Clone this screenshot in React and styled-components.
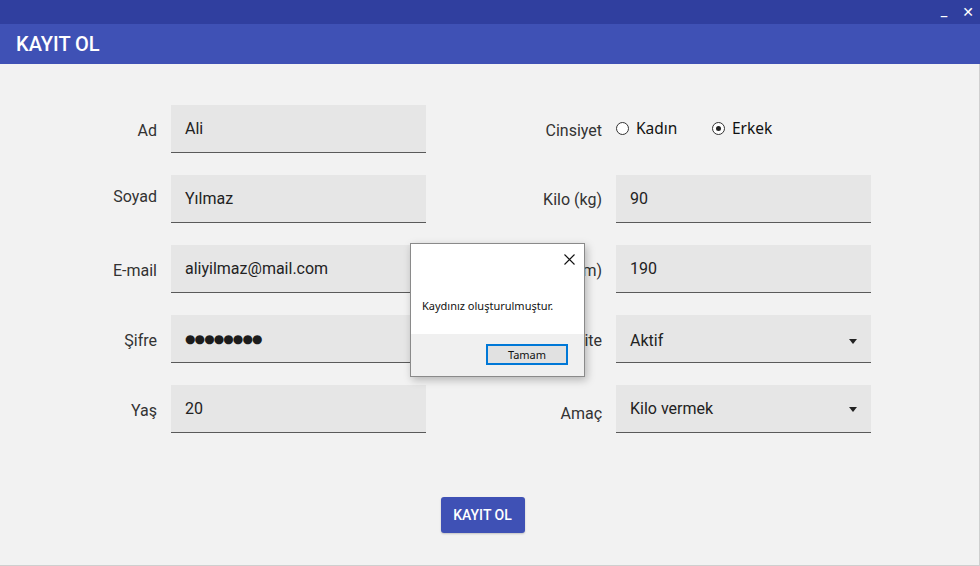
import React from "react";
import styled, { createGlobalStyle } from "styled-components";

const Global = createGlobalStyle`
  html, body { margin: 0; padding: 0; }
  body { width: 980px; height: 566px; overflow: hidden; background: #f2f2f2; font-family: Roboto, "Noto Sans", sans-serif; }
`;

const Win = styled.div`
  width: 980px;
  height: 566px;
  display: flex;
  flex-direction: column;
  position: relative;
  background: #f2f2f2;
`;

const TitleBar = styled.div`
  height: 24px;
  background: #303f9f;
  display: flex;
  justify-content: flex-end;
  align-items: center;
  gap: 12px;
  padding-right: 6px;
`;

const WinBtn = styled.span`
  color: #fff;
  font-family: "DejaVu Sans", sans-serif;
  font-weight: bold;
  font-size: ${p => p.$size || 12}px;
  line-height: 1;
  width: 12px;
  text-align: center;
  padding-bottom: ${p => p.$up || 0}px;
`;

const Header = styled.div`
  height: 40px;
  background: #3f51b5;
  display: flex;
  align-items: center;
  padding-left: 16px;
  color: #fff;
  font-family: Roboto, sans-serif;
  font-weight: 500;
  font-size: 20px;
`;

const Body = styled.div`
  flex: 1;
  border-right: 1px solid #cfcfcf;
  border-bottom: 1px solid #cfcfcf;
  padding-top: 41px;
  display: flex;
  flex-direction: column;
`;

const Form = styled.div`
  display: grid;
  grid-template-columns: 157px 255px 162px 255px;
  grid-auto-rows: 48px;
  column-gap: 14px;
  row-gap: 22px;
`;

const Label = styled.div`
  display: flex;
  align-items: center;
  justify-content: flex-end;
  font-size: 16px;
  color: #333;
  padding-top: ${p => p.$down ?? 2}px;
  padding-bottom: ${p => p.$up ?? 0}px;
`;

const Field = styled.div`
  background: #e6e6e6;
  border-bottom: 1px solid #5a5a5a;
  box-sizing: border-box;
  display: flex;
  align-items: center;
  justify-content: space-between;
  padding: 0 14px;
  padding-top: ${p => p.$down ?? 0}px;
  padding-bottom: ${p => p.$up ?? 0}px;
  font-size: 16px;
  color: #222;
`;

const Dots = styled.span`
  font-family: "DejaVu Sans", sans-serif;
  font-size: 12px;
  letter-spacing: -0.9px;
  color: #1c1c1c;
`;

const Arrow = styled.span`
  width: 0;
  height: 0;
  border-left: 4px solid transparent;
  border-right: 4px solid transparent;
  border-top: 5px solid #222;
  margin-top: 1px;
`;

const Radios = styled.div`
  display: flex;
  align-items: center;
  padding-bottom: 2px;
`;

const Radio = styled.label`
  display: flex;
  align-items: center;
  gap: 7px;
  width: ${p => p.$w || "auto"};
  font-family: "Noto Sans", "Open Sans", sans-serif;
  font-size: 15.5px;
  color: #111;
`;

const Circle = styled.span`
  width: 11px;
  height: 11px;
  border: 1px solid #333;
  border-radius: 50%;
  background: #fff;
  display: flex;
  align-items: center;
  justify-content: center;
  &::after {
    content: "";
    width: 5px;
    height: 5px;
    border-radius: 50%;
    background: ${p => (p.$on ? "#222" : "transparent")};
  }
`;

const Footer = styled.div`
  display: flex;
  justify-content: center;
  padding-right: 14px;
  margin-top: 64px;
`;

const Submit = styled.button`
  width: 84px;
  height: 36px;
  border: none;
  border-radius: 3px;
  background: #3f51b5;
  color: #fff;
  font-family: Roboto, sans-serif;
  font-weight: 500;
  font-size: 14px;
  box-shadow: 0 1px 2px rgba(0,0,0,0.2);
`;

const Dialog = styled.div`
  position: absolute;
  left: 410px;
  top: 243px;
  width: 175px;
  height: 134px;
  box-sizing: border-box;
  border: 1px solid #8a8a8a;
  background: #fff;
  box-shadow: 2px 3px 8px rgba(0,0,0,0.25);
  display: flex;
  flex-direction: column;
  font-family: "Noto Sans", "Liberation Sans", sans-serif;
`;

const DlgTop = styled.div`
  flex: 1;
  position: relative;
  padding: 54px 0 0 11px;
  font-size: 11px;
  color: #111;
`;

const Close = styled.svg`
  position: absolute;
  right: 9px;
  top: 10px;
`;

const DlgBottom = styled.div`
  height: 42px;
  background: #f0f0f0;
  display: flex;
  justify-content: flex-end;
  align-items: flex-start;
  padding: 10px 16px 0 0;
  box-sizing: border-box;
`;

const OkBtn = styled.button`
  width: 82px;
  height: 21px;
  box-sizing: border-box;
  border: 2px solid #0078d7;
  background: #e1e1e1;
  font-family: "Noto Sans", "Liberation Sans", sans-serif;
  font-size: 11px;
  color: #111;
  padding: 0;
`;

export default function App() {
  return (
    <Win>
      <Global />
      <TitleBar>
        <WinBtn $size={13} $up={6}>_</WinBtn>
        <WinBtn $size={14}>✕</WinBtn>
      </TitleBar>
      <Header>KAYIT OL</Header>
      <Body>
        <Form>
          <Label>Ad</Label>
          <Field>Ali</Field>
          <Label>Cinsiyet</Label>
          <Radios>
            <Radio $w="96px"><Circle />Kadın</Radio>
            <Radio><Circle $on />Erkek</Radio>
          </Radios>

          <Label $down={0} $up={6}>Soyad</Label>
          <Field>Yılmaz</Field>
          <Label $down={0}>Kilo (kg)</Label>
          <Field>90</Field>

          <Label>E-mail</Label>
          <Field>aliyilmaz@mail.com</Field>
          <Label>Boy (cm)</Label>
          <Field>190</Field>

          <Label>Şifre</Label>
          <Field $down={1}><Dots>●●●●●●●●</Dots></Field>
          <Label>Aktivite</Label>
          <Field $down={4}>Aktif<Arrow /></Field>

          <Label>Yaş</Label>
          <Field>20</Field>
          <Label $down={8}>Amaç</Label>
          <Field>Kilo vermek<Arrow /></Field>
        </Form>
        <Footer>
          <Submit>KAYIT OL</Submit>
        </Footer>
      </Body>
      <Dialog>
        <DlgTop>
          Kaydınız oluşturulmuştur.
          <Close width="11" height="11" viewBox="0 0 11 11">
            <path d="M0.5 0.5 L10.5 10.5 M10.5 0.5 L0.5 10.5" stroke="#111" strokeWidth="1.1" fill="none" />
          </Close>
        </DlgTop>
        <DlgBottom>
          <OkBtn>Tamam</OkBtn>
        </DlgBottom>
      </Dialog>
    </Win>
  );
}
